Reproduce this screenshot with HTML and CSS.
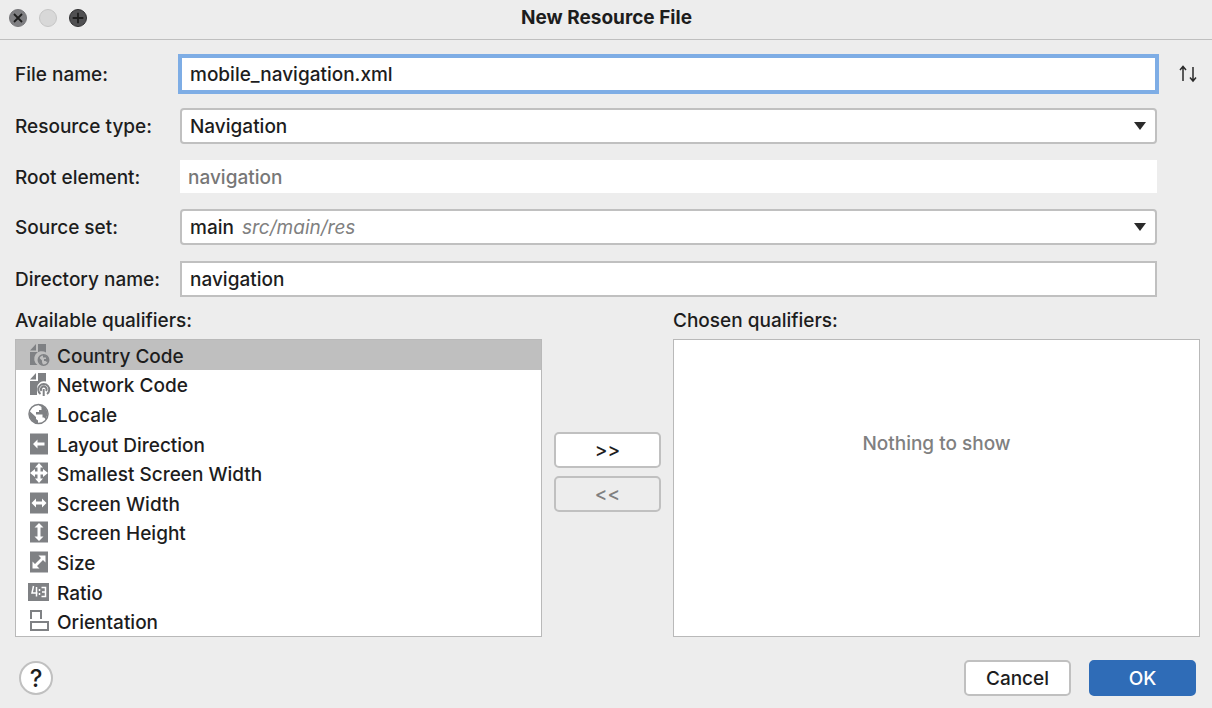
FILE: index.html
```html
<!DOCTYPE html>
<html lang="en">
<head>
<meta charset="utf-8">
<title>New Resource File</title>
<link rel="stylesheet" href="styles.css">
</head>
<body class="dialog">
<header class="titlebar">
  <div class="lights">
    <button class="light light-close" type="button" aria-label="Close"><svg viewBox="0 0 18 18"><path d="M4.500 4.500l9 9M13.500 4.500l-9 9"/></svg></button>
    <button class="light light-min" type="button" aria-label="Minimize" disabled></button>
    <button class="light light-zoom" type="button" aria-label="Zoom"><svg viewBox="0 0 18 18"><path d="M9 3v12M3 9h12"/></svg></button>
  </div>
  <h1 class="title">New Resource File</h1>
</header>
<main class="content">
  <form class="fields">
    <label class="label" for="file">File name:</label>
    <input class="field field-focus" id="file" type="text" value="mobile_navigation.xml">
    <button class="swap" type="button" aria-label="Previous or next kind"><svg viewBox="0 0 18 18"><path d="M4 16V2M1 5l3-3.500 3 3.500M14 2v14M11 12.500l3 3.500 3-3.500"/></svg></button>

    <label class="label" for="type">Resource type:</label>
    <div class="combo">
      <select class="field field-select" id="type"><option>Navigation</option></select>
      <svg class="caret" viewBox="0 0 12 8"><path d="M0 0h12L6 8z"/></svg>
    </div>

    <label class="label" for="root">Root element:</label>
    <input class="field field-plain" id="root" type="text" value="navigation" disabled>

    <label class="label" for="source">Source set:</label>
    <div class="combo">
      <select class="field field-select" id="source"><option>main</option></select>
      <span class="hint">src/main/res</span>
      <svg class="caret" viewBox="0 0 12 8"><path d="M0 0h12L6 8z"/></svg>
    </div>

    <label class="label" for="dir">Directory name:</label>
    <input class="field" id="dir" type="text" value="navigation">
  </form>

  <section class="qualifiers">
    <div class="panel">
      <h2 class="heading" id="available">Available qualifiers:</h2>
      <ul class="list" role="listbox" aria-labelledby="available">
        <li class="item item-selected" role="option" aria-selected="true"><svg class="icon" viewBox="0 0 20 20"><path class="fill" d="M9 -1h8v8.500a7 7 0 0 0-8.500 12.500H1V7h8z"/><path class="fill" d="M1 5.500L7 -1v6.500z"/><circle class="line" cx="14.500" cy="15" r="5.200"/><path class="fill" d="M10 12.500l3 3v1.500l1 3c-3 0-5-4-4-7.500zM14 10c3 0 5 2 5.500 4.500l-1 3-2-1.500h-1.500v-2h2v-1.500H14z"/></svg>Country Code</li>
        <li class="item" role="option"><svg class="icon" viewBox="0 0 20 20"><path class="fill" d="M9 -1h8v8.500a7 7 0 0 0-9 6.500v7H1V7h8z"/><path class="fill" d="M1 5.500L7 -1v6.500z"/><path class="line bold" d="M11.500 20a5.500 5.500 0 1 1 6.500 0M12.500 17a2.800 2.800 0 1 1 4.500 0"/><path class="fill" d="M13.700 15h2v7h-2z"/></svg>Network Code</li>
        <li class="item" role="option"><svg class="icon" viewBox="0 0 20 20"><circle class="line" cx="9.500" cy="10" r="9.500"/><path class="fill" d="M.5 7l6.500 6v2l2 1.500v3C3 19 -.5 13 .5 7zM9 .5c5 0 9 3 9.500 9l-1.500 6-2-2h-1.500v-3H7V8h3V6h2.500V3z"/></svg>Locale</li>
        <li class="item" role="option"><svg class="icon" viewBox="0 0 20 20"><path class="fill" d="M1 -.5h18v21H1z"/><path class="cut" d="M4 10l4.500-4.500v3H15.500v3H8.500v3z"/></svg>Layout Direction</li>
        <li class="item" role="option"><svg class="icon" viewBox="0 0 20 20"><path class="fill" d="M1 -.5h18v21H1z"/><path class="cut" d="M10 0l4 4.500h-2.500v4H14V6l5 4-5 4v-2.500h-2.500v4H14L10 20l-4-4.500h2.500v-4H6V14l-5-4 5-4v2.500h2.500v-4H6z"/></svg>Smallest Screen Width</li>
        <li class="item" role="option"><svg class="icon" viewBox="0 0 20 20"><path class="fill" d="M1 -.5h18v21H1z"/><path class="cut" d="M2.500 10L7 5.500v3h6v-3l4.500 4.500-4.500 4.500v-3H7v3z"/></svg>Screen Width</li>
        <li class="item" role="option"><svg class="icon" viewBox="0 0 20 20"><path class="fill" d="M1 -.5h18v21H1z"/><path class="cut" d="M10 1l4.500 4.500h-3v9h3L10 19l-4.500-4.500h3v-9h-3z"/></svg>Screen Height</li>
        <li class="item" role="option"><svg class="icon" viewBox="0 0 20 20"><path class="fill" d="M1 -.5h18v21H1z"/><path class="cut" d="M9.500 3.500H16.500v7L14 8l-6 6 2.500 2.500h-7v-7L6 12l6-6z"/></svg>Size</li>
        <li class="item" role="option"><svg class="icon" viewBox="0 0 20 20"><path class="fill" d="M-1 1h21v18H-1z"/><path class="glyph" d="M4.500 4L3 11H8.500M7.500 5v9.500M10.500 7v2M10.500 11v2M12.500 5.500h4v9h-4M13 10h3"/></svg>Ratio</li>
        <li class="item" role="option"><svg class="icon" viewBox="0 0 20 20"><path class="line bold" d="M2 8V0h10v8M2 11h17v8H2z"/></svg>Orientation</li>
      </ul>
    </div>
    <div class="movers">
      <button class="button" type="button">&gt;&gt;</button>
      <button class="button" type="button" disabled>&lt;&lt;</button>
    </div>
    <div class="panel">
      <h2 class="heading" id="chosen">Chosen qualifiers:</h2>
      <div class="list list-empty" role="listbox" aria-labelledby="chosen">Nothing to show</div>
    </div>
  </section>
</main>
<footer class="footer">
  <button class="help" type="button">?</button>
  <div class="actions">
    <button class="button" type="button">Cancel</button>
    <button class="button button-primary" type="button">OK</button>
  </div>
</footer>
</body>
</html>
```
FILE: styles.css
```css
* { box-sizing: border-box; }

.dialog {
  display: flex;
  flex-direction: column;
  min-height: 100vh;
  margin: 0;
  background: #ededed;
  color: #1d1d1d;
  font: 500 19px/24px Inter, "Liberation Sans", sans-serif;
}

button, input, select { font: inherit; color: inherit; }

.titlebar {
  display: grid;
  grid-template-columns: 1fr auto 1fr;
  align-items: center;
  height: 40px;
  padding: 0 8px 4px 9px;
  border-bottom: 1px solid #bfbfbf;
}
.title { margin: 0; font-size: 19px; font-weight: 700; }
.lights { display: flex; gap: 12px; }
.light {
  width: 18px;
  height: 18px;
  padding: 0;
  border: 1px solid #77777a;
  border-radius: 50%;
  background: #7f7f82;
}
.light svg { display: block; width: 16px; height: 16px; fill: none; stroke: #1d1d1d; stroke-width: 2; }
.light-min { background: #d8d8d8; border-color: #c6c6c6; }
.light-zoom { background: #505052; border-color: #303032; }

.content { flex: 1; display: flex; flex-direction: column; padding: 16px 12px 0 15px; }

.fields {
  display: grid;
  grid-template-columns: 165px 1fr 43px;
  row-gap: 16px;
  align-items: center;
}
.label { grid-column: 1; padding-top: 2px; }
.field {
  grid-column: 2;
  width: 100%;
  height: 36px;
  padding: 1px 8px 0;
  border: 2px solid #c0c0c0;
  border-radius: 0;
  outline: none;
  background: #fff;
}
.field-focus { border-color: #7eade5; box-shadow: 0 0 0 2px #7eade5; }
.field-select { grid-area: 1 / 1; padding-top: 2px; appearance: none; border-radius: 4px; }
.field-plain { height: 33px; border: 0; color: #777; }
.combo { grid-column: 2; display: grid; align-items: center; }
.hint { grid-area: 1 / 1; padding: 2px 0 0 62px; color: #808080; font-weight: 400; font-style: italic; pointer-events: none; }
.caret { grid-area: 1 / 1; justify-self: end; width: 12px; height: 8px; margin-right: 11px; fill: #2a2a2a; pointer-events: none; }
.swap {
  grid-column: 3;
  justify-self: end;
  width: 18px;
  height: 18px;
  margin-right: 3px;
  padding: 0;
  border: 0;
  background: none;
}
.swap svg { display: block; fill: none; stroke: #2a2a2a; stroke-width: 1.500; }

.qualifiers {
  flex: 1;
  display: grid;
  grid-template-columns: 1fr 107px 1fr;
  column-gap: 12px;
  margin-top: 12px;
}
.panel { display: flex; flex-direction: column; }
.heading { margin: 0 0 6px; font-size: inherit; font-weight: inherit; }
.list {
  flex: 1;
  display: grid;
  grid-auto-rows: 1fr;
  margin: 0;
  padding: 0;
  border: 1px solid #b9b9b9;
  background: #fff;
  list-style: none;
}
.item { display: flex; align-items: center; gap: 8px; padding: 4px 0 0 13px; }
.item-selected { background: #bfbfbf; }
.icon { flex: none; width: 20px; height: 20px; margin-bottom: 4px; overflow: visible; }
.fill { fill: #7f8184; }
.cut { fill: #fff; }
.line { fill: none; stroke: #7f8184; stroke-width: 1.500; }
.bold { stroke-width: 2; }
.glyph { fill: none; stroke: #fff; stroke-width: 1.500; }
.list-empty { display: block; padding-top: 92px; color: #808080; text-align: center; }

.movers { display: flex; flex-direction: column; gap: 8px; padding-top: 123px; }
.button {
  width: 107px;
  height: 36px;
  padding: 2px 0 0;
  border: 2px solid #c0c0c0;
  border-radius: 5px;
  background: #fff;
}
.button:disabled { background: #ededed; color: #808080; }
.button-primary { border-color: #2f6cb7; background: #2f6cb7; color: #fff; }

.footer {
  display: flex;
  align-items: center;
  justify-content: space-between;
  padding: 23px 16px 12px 19px;
}
.actions { display: flex; gap: 18px; }
.help {
  width: 34px;
  height: 34px;
  padding: 2px 0 0;
  border: 2px solid #c0c0c0;
  border-radius: 50%;
  background: #fff;
  font-size: 24px;
}
```
